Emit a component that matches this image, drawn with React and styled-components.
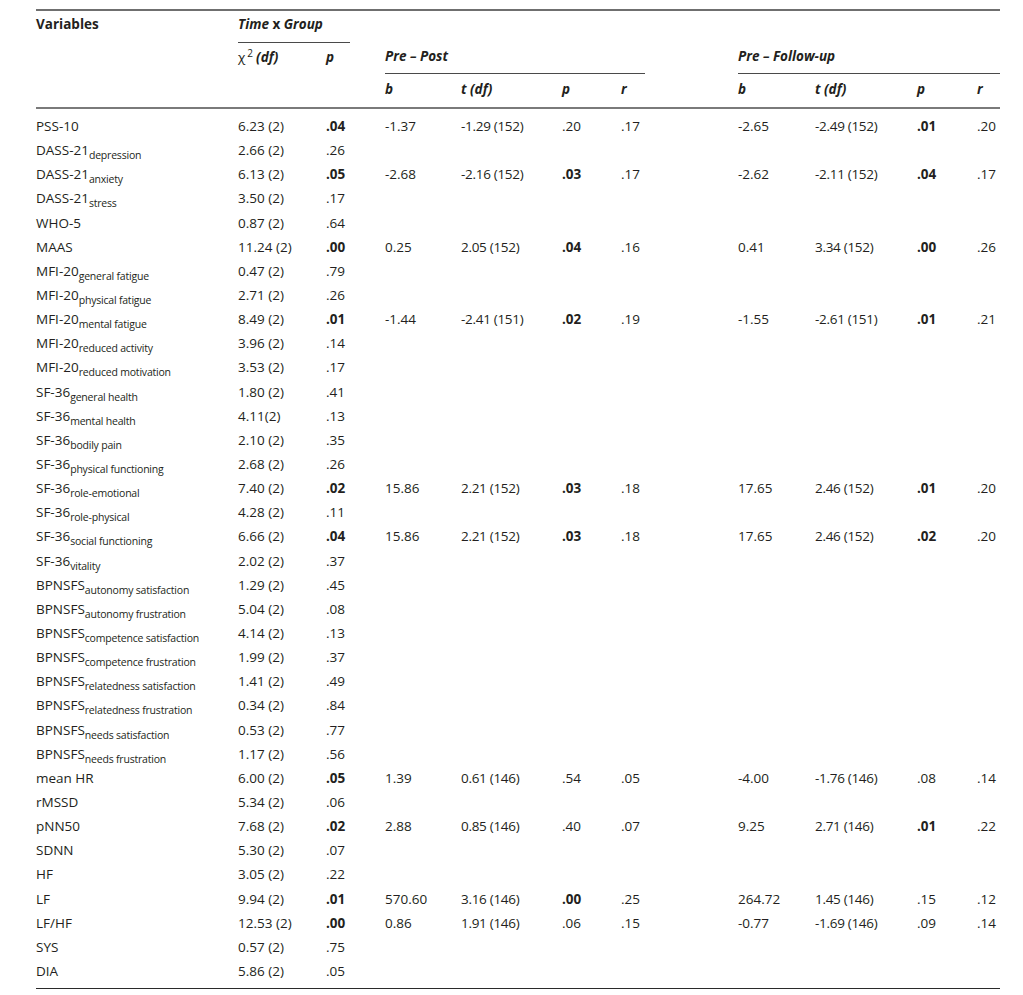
import React from 'react';
import styled, { createGlobalStyle, css } from 'styled-components';

const GlobalStyle = createGlobalStyle`
  body {
    margin: 0;
    background: #fff;
    color: #231f20;
    font-family: "Open Sans", "Noto Sans", sans-serif;
  }
`;

const COLS = '202px 88px 24px 35px 76px 101px 59px 24px 93px 77px 102px 60px 23px';

const TableWrap = styled.div`
  margin: 9px 0 0 36px;
  width: 964px;
  border-top: 2px solid #6f6f6f;
  font-size: 13.5px;
`;

const Head = styled.div`
  display: grid;
  grid-template-columns: ${COLS};
  grid-template-rows: 32px 31px 33px;
  border-bottom: 2px solid #7a7a7a;
`;

const headText = css`
  font-weight: 700;
  font-style: italic;
  line-height: 18px;
  white-space: nowrap;
`;

const HeadCell = styled.div`
  ${headText};
  grid-column: ${p => p.$col};
  grid-row: ${p => p.$row};
  padding-top: ${p => p.$pad ?? 4}px;
  border-bottom: ${p => (p.$rule ? '1px solid #4a4a4a' : 'none')};
  font-style: ${p => (p.$upright ? 'normal' : 'italic')};
`;

const Upright = styled.span`
  font-style: normal;
`;

const Chi = styled.span`
  font-weight: 400;
  font-style: normal;
`;

const Sup = styled.sup`
  font-weight: 400;
  font-style: normal;
  font-size: 10px;
  vertical-align: 5px;
  line-height: 0;
  margin: 0 3px 0 2px;
`;

const Body = styled.div`
  padding: 5px 0 5px;
  border-bottom: 1px solid #2a2a2a;
`;

const Row = styled.div`
  display: grid;
  grid-template-columns: ${COLS};
  height: 24.15px;
  align-items: center;
  line-height: 18px;
  white-space: nowrap;
`;

const Cell = styled.div`
  grid-column: ${p => p.$col};
  font-weight: ${p => (p.$bold ? 700 : 400)};
  letter-spacing: ${p => (p.$tight ? '-0.3px' : '0')};
`;

const Sub = styled.sub`
  font-size: 10.5px;
  vertical-align: -4px;
  line-height: 0;
  letter-spacing: -0.2px;
`;

const rows = [
  ['PSS-10', '', '6.23 (2)', '.04', ['-1.37', '-1.29 (152)', '.20', '.17', '-2.65', '-2.49 (152)', '.01', '.20']],
  ['DASS-21', 'depression', '2.66 (2)', '.26'],
  ['DASS-21', 'anxiety', '6.13 (2)', '.05', ['-2.68', '-2.16 (152)', '.03', '.17', '-2.62', '-2.11 (152)', '.04', '.17']],
  ['DASS-21', 'stress', '3.50 (2)', '.17'],
  ['WHO-5', '', '0.87 (2)', '.64'],
  ['MAAS', '', '11.24 (2)', '.00', ['0.25', '2.05 (152)', '.04', '.16', '0.41', '3.34 (152)', '.00', '.26']],
  ['MFI-20', 'general fatigue', '0.47 (2)', '.79'],
  ['MFI-20', 'physical fatigue', '2.71 (2)', '.26'],
  ['MFI-20', 'mental fatigue', '8.49 (2)', '.01', ['-1.44', '-2.41 (151)', '.02', '.19', '-1.55', '-2.61 (151)', '.01', '.21']],
  ['MFI-20', 'reduced activity', '3.96 (2)', '.14'],
  ['MFI-20', 'reduced motivation', '3.53 (2)', '.17'],
  ['SF-36', 'general health', '1.80 (2)', '.41'],
  ['SF-36', 'mental health', '4.11(2)', '.13'],
  ['SF-36', 'bodily pain', '2.10 (2)', '.35'],
  ['SF-36', 'physical functioning', '2.68 (2)', '.26'],
  ['SF-36', 'role-emotional', '7.40 (2)', '.02', ['15.86', '2.21 (152)', '.03', '.18', '17.65', '2.46 (152)', '.01', '.20']],
  ['SF-36', 'role-physical', '4.28 (2)', '.11'],
  ['SF-36', 'social functioning', '6.66 (2)', '.04', ['15.86', '2.21 (152)', '.03', '.18', '17.65', '2.46 (152)', '.02', '.20']],
  ['SF-36', 'vitality', '2.02 (2)', '.37'],
  ['BPNSFS', 'autonomy satisfaction', '1.29 (2)', '.45'],
  ['BPNSFS', 'autonomy frustration', '5.04 (2)', '.08'],
  ['BPNSFS', 'competence satisfaction', '4.14 (2)', '.13'],
  ['BPNSFS', 'competence frustration', '1.99 (2)', '.37'],
  ['BPNSFS', 'relatedness satisfaction', '1.41 (2)', '.49'],
  ['BPNSFS', 'relatedness frustration', '0.34 (2)', '.84'],
  ['BPNSFS', 'needs satisfaction', '0.53 (2)', '.77'],
  ['BPNSFS', 'needs frustration', '1.17 (2)', '.56'],
  ['mean HR', '', '6.00 (2)', '.05', ['1.39', '0.61 (146)', '.54', '.05', '-4.00', '-1.76 (146)', '.08', '.14']],
  ['rMSSD', '', '5.34 (2)', '.06'],
  ['pNN50', '', '7.68 (2)', '.02', ['2.88', '0.85 (146)', '.40', '.07', '9.25', '2.71 (146)', '.01', '.22']],
  ['SDNN', '', '5.30 (2)', '.07'],
  ['HF', '', '3.05 (2)', '.22'],
  ['LF', '', '9.94 (2)', '.01', ['570.60', '3.16 (146)', '.00', '.25', '264.72', '1.45 (146)', '.15', '.12']],
  ['LF/HF', '', '12.53 (2)', '.00', ['0.86', '1.91 (146)', '.06', '.15', '-0.77', '-1.69 (146)', '.09', '.14']],
  ['SYS', '', '0.57 (2)', '.75'],
  ['DIA', '', '5.86 (2)', '.05'],
];

// p-values below .06 are set in bold, except the table's own DIA .05
const isSig = (v, name) => name !== 'DIA' && parseFloat(v) < 0.06;

const contrastCols = [5, 6, 7, 8, 10, 11, 12, 13];

const App = () => (
  <>
    <GlobalStyle />
    <TableWrap>
      <Head>
        <HeadCell $col="1" $row="1 / 4" $upright>Variables</HeadCell>
        <HeadCell $col="2 / 4" $row="1" $rule>
          Time <Upright>x</Upright> Group
        </HeadCell>
        <HeadCell $col="2" $row="2 / 4" $pad={5}>
          <Chi>χ</Chi>
          <Sup>2</Sup>(df)
        </HeadCell>
        <HeadCell $col="3" $row="2 / 4" $pad={5}>p</HeadCell>
        <HeadCell $col="5 / 9" $row="2" $rule>Pre – Post</HeadCell>
        <HeadCell $col="10 / 14" $row="2" $rule>Pre – Follow-up</HeadCell>
        {['b', 't (df)', 'p', 'r', 'b', 't (df)', 'p', 'r'].map((h, i) => (
          <HeadCell key={i} $col={contrastCols[i]} $row="3" $pad={6}>
            {h}
          </HeadCell>
        ))}
      </Head>
      <Body>
        {rows.map(([name, sub, chi, p, contrasts], i) => (
          <Row key={i}>
            <Cell $col="1">
              {name}
              {sub && <Sub>{sub}</Sub>}
            </Cell>
            <Cell $col="2">{chi}</Cell>
            <Cell $col="3" $bold={isSig(p, name)}>{p}</Cell>
            {contrasts &&
              contrasts.map((v, j) => (
                <Cell
                  key={j}
                  $col={contrastCols[j]}
                  $tight={j % 4 === 1}
                  $bold={j % 4 === 2 && parseFloat(v) < 0.05}
                >
                  {v}
                </Cell>
              ))}
          </Row>
        ))}
      </Body>
    </TableWrap>
  </>
);

export default App;
